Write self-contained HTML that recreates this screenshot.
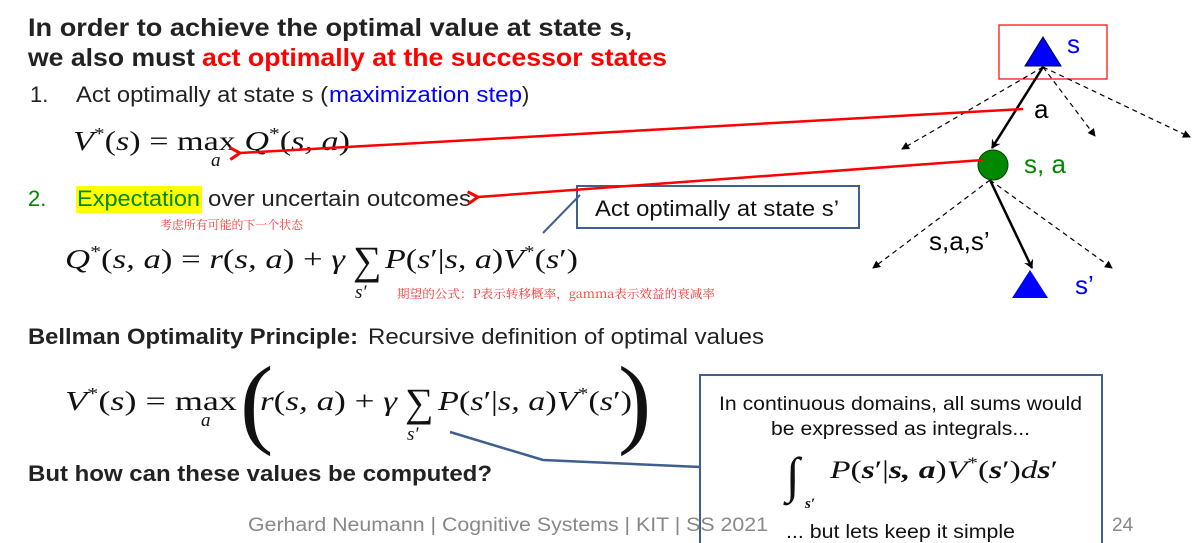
<!DOCTYPE html>
<html><head><meta charset="utf-8"><style>
html,body{margin:0;padding:0;background:#fff;width:1196px;height:543px;overflow:hidden}
svg{display:block}
.s{font-family:"Liberation Sans","Noto Sans CJK SC",sans-serif}
.m{font-family:"Liberation Serif","DejaVu Serif",serif}
.c{font-family:"Noto Serif CJK SC","Noto Sans CJK SC",serif}
</style></head><body>
<svg width="1196" height="543" viewBox="0 0 1196 543" xmlns="http://www.w3.org/2000/svg">
<defs>
<marker id="ar" markerWidth="10" markerHeight="10" refX="8" refY="5" orient="auto" markerUnits="userSpaceOnUse"><path d="M0,0 L9,5 L0,10 L3,5 Z" fill="#000"/></marker>
<marker id="ad" markerWidth="8" markerHeight="8" refX="7" refY="4" orient="auto" markerUnits="userSpaceOnUse"><path d="M0,0 L8,4 L0,8 Z" fill="#000"/></marker>
<marker id="rr" markerWidth="14" markerHeight="14" refX="2" refY="7" orient="auto" markerUnits="userSpaceOnUse"><path d="M12,1 L2,7 L12,13" fill="none" stroke="#f00" stroke-width="3"/></marker>
</defs>
<g class="s">
<text x="28" y="36" font-size="25" font-weight="bold" fill="#222" textLength="604" lengthAdjust="spacingAndGlyphs">In order to achieve the optimal value at state s,</text>
<text x="28" y="66" font-size="25" font-weight="bold" fill="#222" textLength="167" lengthAdjust="spacingAndGlyphs">we also must</text>
<text x="202" y="66" font-size="25" font-weight="bold" fill="#f00" textLength="465" lengthAdjust="spacingAndGlyphs">act optimally at the successor states</text>
<text x="30" y="102" font-size="22" fill="#222">1.</text>
<text x="76" y="102" font-size="22" fill="#222" textLength="252" lengthAdjust="spacingAndGlyphs">Act optimally at state s (</text>
<text x="329" y="102" font-size="22" fill="#00f" textLength="193" lengthAdjust="spacingAndGlyphs">maximization step</text>
<text x="522" y="102" font-size="22" fill="#222">)</text>
<text x="28" y="206" font-size="22" fill="#080">2.</text>
<rect x="76" y="186" width="126" height="27" fill="#ff0"/>
<text x="77" y="206" font-size="22" fill="#080" textLength="123" lengthAdjust="spacingAndGlyphs">Expectation</text>
<text x="208" y="206" font-size="22" fill="#222" textLength="263" lengthAdjust="spacingAndGlyphs">over uncertain outcomes</text>
<text x="160" y="229" font-size="12" fill="#f33" class="c" textLength="143" lengthAdjust="spacingAndGlyphs">考虑所有可能的下一个状态</text>
<text x="397" y="298" font-size="12" fill="#f33" class="c" textLength="318" lengthAdjust="spacingAndGlyphs">期望的公式：P表示转移概率，gamma表示效益的衰减率</text>
<text x="28" y="344" font-size="22" font-weight="bold" fill="#222" textLength="330" lengthAdjust="spacingAndGlyphs">Bellman Optimality Principle:</text>
<text x="368" y="344" font-size="22" fill="#222" textLength="396" lengthAdjust="spacingAndGlyphs">Recursive definition of optimal values</text>
<text x="28" y="481" font-size="22" font-weight="bold" fill="#222" textLength="464" lengthAdjust="spacingAndGlyphs">But how can these values be computed?</text>
</g>
<!-- formulas -->
<g class="m" fill="#111">
<text x="73" y="150" font-size="27" textLength="277" lengthAdjust="spacingAndGlyphs"><tspan font-style="italic">V</tspan><tspan font-size="17" dy="-11">*</tspan><tspan dy="11">(</tspan><tspan font-style="italic">s</tspan>) = max <tspan font-style="italic">Q</tspan><tspan font-size="17" dy="-11">*</tspan><tspan dy="11">(</tspan><tspan font-style="italic">s, a</tspan>)</text>
<text x="211" y="166" font-size="19" font-style="italic">a</text>
<text x="65" y="268" font-size="27" textLength="280" lengthAdjust="spacingAndGlyphs"><tspan font-style="italic">Q</tspan><tspan font-size="17" dy="-11">*</tspan><tspan dy="11">(</tspan><tspan font-style="italic">s, a</tspan>) = <tspan font-style="italic">r</tspan>(<tspan font-style="italic">s, a</tspan>) + <tspan font-style="italic">γ</tspan></text>
<text x="353" y="274" font-size="40">∑</text>
<text x="385" y="268" font-size="27" textLength="193" lengthAdjust="spacingAndGlyphs"><tspan font-style="italic">P</tspan>(<tspan font-style="italic">s</tspan>′|<tspan font-style="italic">s, a</tspan>)<tspan font-style="italic">V</tspan><tspan font-size="17" dy="-11">*</tspan><tspan dy="11">(</tspan><tspan font-style="italic">s</tspan>′)</text>
<text x="355" y="298" font-size="19" font-style="italic">s′</text>
<text x="65" y="410" font-size="27" textLength="172" lengthAdjust="spacingAndGlyphs"><tspan font-style="italic">V</tspan><tspan font-size="17" dy="-11">*</tspan><tspan dy="11">(</tspan><tspan font-style="italic">s</tspan>) = max</text>
<text x="201" y="426" font-size="19" font-style="italic">a</text>
<text x="240" y="435" font-size="100" font-weight="100">(</text>
<text x="260" y="410" font-size="27" textLength="137" lengthAdjust="spacingAndGlyphs"><tspan font-style="italic">r</tspan>(<tspan font-style="italic">s, a</tspan>) + <tspan font-style="italic">γ</tspan></text>
<text x="405" y="416" font-size="40">∑</text>
<text x="438" y="410" font-size="27" textLength="194" lengthAdjust="spacingAndGlyphs"><tspan font-style="italic">P</tspan>(<tspan font-style="italic">s</tspan>′|<tspan font-style="italic">s, a</tspan>)<tspan font-style="italic">V</tspan><tspan font-size="17" dy="-11">*</tspan><tspan dy="11">(</tspan><tspan font-style="italic">s</tspan>′)</text>
<text x="407" y="440" font-size="19" font-style="italic">s′</text>
<text x="618" y="435" font-size="100" font-weight="100">)</text>
</g>
<!-- callout 1 -->
<rect x="577" y="186" width="282" height="42" fill="#fff" stroke="#3f5f8f" stroke-width="2"/>
<line x1="580" y1="195" x2="543" y2="233" stroke="#3f5f8f" stroke-width="2"/>
<text x="595" y="216" font-size="22" fill="#111" class="s" textLength="244" lengthAdjust="spacingAndGlyphs">Act optimally at state s’</text>
<!-- callout 2 -->
<polyline points="450,432 543,460 700,467" fill="none" stroke="#3f5f8f" stroke-width="2.5"/>
<rect x="700" y="375" width="402" height="180" fill="#fff" stroke="#3f5f8f" stroke-width="2"/>
<g class="s" font-size="19" fill="#111">
<text x="719" y="410" textLength="363" lengthAdjust="spacingAndGlyphs">In continuous domains, all sums would</text>
<text x="771" y="435" textLength="259" lengthAdjust="spacingAndGlyphs">be expressed as integrals...</text>
<text x="786" y="538" textLength="229" lengthAdjust="spacingAndGlyphs">... but lets keep it simple</text>
</g>
<g class="m" fill="#111">
<text x="786" y="492" font-size="50" font-style="italic">∫</text>
<text x="805" y="508" font-size="15" font-style="italic" font-weight="bold">s′</text>
<text x="830" y="478" font-size="25" textLength="228" lengthAdjust="spacingAndGlyphs"><tspan font-style="italic">P</tspan>(<tspan font-style="italic" font-weight="bold">s</tspan>′|<tspan font-style="italic" font-weight="bold">s, a</tspan>)<tspan font-style="italic">V</tspan><tspan font-size="16" dy="-10">*</tspan><tspan dy="10">(</tspan><tspan font-style="italic" font-weight="bold">s</tspan>′)<tspan font-style="italic">d</tspan><tspan font-style="italic" font-weight="bold">s</tspan>′</text>
</g>
<g class="s">
<text x="248" y="531" font-size="19" fill="#888" textLength="520" lengthAdjust="spacingAndGlyphs">Gerhard Neumann | Cognitive Systems | KIT | SS 2021</text>
<text x="1112" y="531" font-size="19" fill="#888">24</text>
</g>
<!-- tree -->
<rect x="999" y="25" width="108" height="54" fill="none" stroke="#f00" stroke-width="1.2"/>
<g stroke="#000" stroke-width="1.2" stroke-dasharray="5,4" fill="none">
<line x1="1043" y1="67" x2="902" y2="149" marker-end="url(#ad)"/>
<line x1="1043" y1="67" x2="1095" y2="136" marker-end="url(#ad)"/>
<line x1="1043" y1="67" x2="1190" y2="137" marker-end="url(#ad)"/>
<line x1="990" y1="180" x2="873" y2="268" marker-end="url(#ad)"/>
<line x1="990" y1="180" x2="1112" y2="268" marker-end="url(#ad)"/>
</g>
<line x1="1043" y1="67" x2="992" y2="148" stroke="#000" stroke-width="2.5" marker-end="url(#ar)"/>
<line x1="990" y1="180" x2="1032" y2="268" stroke="#000" stroke-width="2.5" marker-end="url(#ar)"/>
<polygon points="1043,37 1061,66 1025,66" fill="#00f" stroke="#004" stroke-width="1"/>
<circle cx="993" cy="165" r="15" fill="#080" stroke="#040" stroke-width="1"/>
<polygon points="1030,270 1048,298 1012,298" fill="#00f"/>
<g class="s" font-size="26">
<text x="1067" y="53" fill="#00f">s</text>
<text x="1034" y="118" fill="#000">a</text>
<text x="1024" y="173" fill="#080">s, a</text>
<text x="929" y="250" fill="#000">s,a,s’</text>
<text x="1075" y="294" fill="#00f">s’</text>
</g>
<!-- red arrows -->
<line x1="1023" y1="109" x2="240" y2="153" stroke="#f00" stroke-width="2.5" marker-end="url(#rr)"/>
<line x1="983" y1="160" x2="478" y2="197" stroke="#f00" stroke-width="2.5" marker-end="url(#rr)"/>
</svg>
</body></html>
